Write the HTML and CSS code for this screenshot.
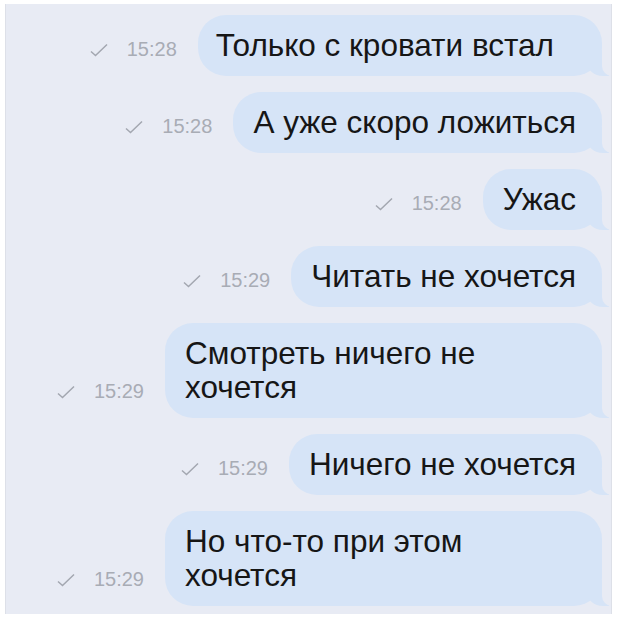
FILE: index.html
```html
<!DOCTYPE html>
<html lang="ru">
<head>
    <meta charset="UTF-8">
    <meta name="viewport" content="width=device-width, initial-scale=1.0">
    <title>Сообщения</title>
    <link rel="stylesheet" href="styles.css">
</head>
<body>
    <!-- Chat panel -->
    <main class="chat">
        <div class="row">
            <div class="meta">
                <svg class="check" viewBox="0 0 18 14"><path d="M1 8.5 L5.5 12.5 L17 1.5"/></svg>
                <span class="time">15:28</span>
            </div>
            <div class="bubble bubble-wide">Только с кровати встал</div>
        </div>
        <div class="row">
            <div class="meta">
                <svg class="check" viewBox="0 0 18 14"><path d="M1 8.5 L5.5 12.5 L17 1.5"/></svg>
                <span class="time">15:28</span>
            </div>
            <div class="bubble">А уже скоро ложиться</div>
        </div>
        <div class="row">
            <div class="meta">
                <svg class="check" viewBox="0 0 18 14"><path d="M1 8.5 L5.5 12.5 L17 1.5"/></svg>
                <span class="time">15:28</span>
            </div>
            <div class="bubble">Ужас</div>
        </div>
        <div class="row">
            <div class="meta">
                <svg class="check" viewBox="0 0 18 14"><path d="M1 8.5 L5.5 12.5 L17 1.5"/></svg>
                <span class="time">15:29</span>
            </div>
            <div class="bubble">Читать не хочется</div>
        </div>
        <div class="row">
            <div class="meta">
                <svg class="check" viewBox="0 0 18 14"><path d="M1 8.5 L5.5 12.5 L17 1.5"/></svg>
                <span class="time">15:29</span>
            </div>
            <div class="bubble">Смотреть ничего не хочется</div>
        </div>
        <div class="row">
            <div class="meta">
                <svg class="check" viewBox="0 0 18 14"><path d="M1 8.5 L5.5 12.5 L17 1.5"/></svg>
                <span class="time">15:29</span>
            </div>
            <div class="bubble">Ничего не хочется</div>
        </div>
        <div class="row">
            <div class="meta">
                <svg class="check" viewBox="0 0 18 14"><path d="M1 8.5 L5.5 12.5 L17 1.5"/></svg>
                <span class="time">15:29</span>
            </div>
            <div class="bubble">Но что-то при этом хочется</div>
        </div>
    </main>
</body>
</html>
```

FILE: styles.css
```css
body {
    margin: 0;
    padding: 4px 8px 11px 5px;
    background-color: #fff;
    font-family: "Liberation Sans", Arial, sans-serif;
}
.chat {
    display: flex;
    flex-direction: column;
    align-items: flex-end;
    gap: 16px;
    height: 610px;
    box-sizing: border-box;
    padding: 11px 9px 0 0;
    background-color: #e8ebf4;
    border-left: 1px solid #dde0e8;
    border-right: 1px solid #dde0e8;
    overflow: hidden;
}
.row {
    display: flex;
    justify-content: flex-end;
    align-items: last baseline;
    gap: 21px;
}
.meta {
    display: flex;
    align-items: center;
    gap: 19px;
}
.check {
    width: 18px;
    height: 14px;
    fill: none;
    stroke: #a3a7b0;
    stroke-width: 1.5;
}
.time {
    font-size: 20px;
    color: #a8acb5;
}
.bubble {
    position: relative;
    max-width: 391px;
    padding: 13px 26px 14px 20px;
    background-color: #d6e4f7;
    border-radius: 28px;
    font-size: 31.5px;
    line-height: 34px;
    color: #161616;
}
.bubble-wide {
    padding-left: 18px;
    padding-right: 48px;
}
.bubble::before {
    content: "";
    position: absolute;
    right: -7px;
    bottom: 0;
    width: 22px;
    height: 26px;
    background-color: #d6e4f7;
    border-bottom-left-radius: 16px 14px;
}
.bubble::after {
    content: "";
    position: absolute;
    right: -10px;
    bottom: 0;
    width: 10px;
    height: 26px;
    background-color: #e8ebf4;
    border-bottom-left-radius: 10px;
}
```
